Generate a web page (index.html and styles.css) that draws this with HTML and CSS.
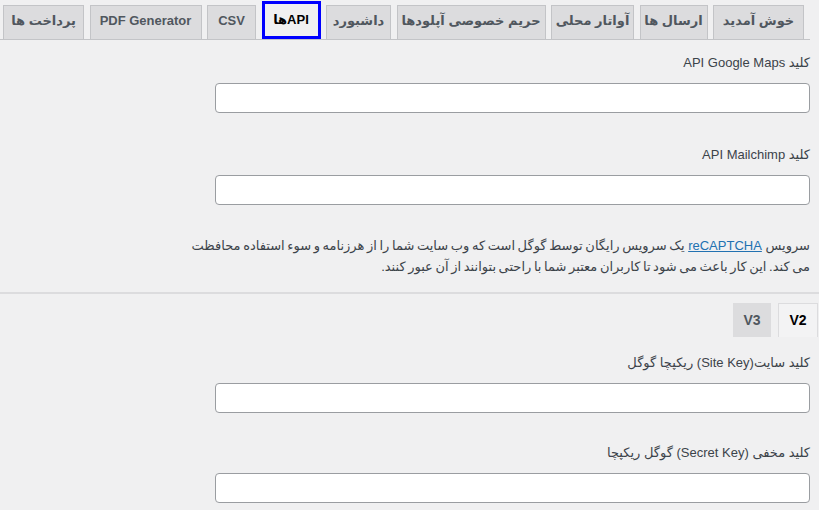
FILE: index.html
```html
<!DOCTYPE html>
<html lang="fa" dir="rtl">
<head>
<meta charset="utf-8">
<title>تنظیمات API</title>
<link rel="stylesheet" href="styles.css">
</head>
<body>
<nav class="tabs">
  <a class="tab tab-welcome">خوش آمدید</a>
  <a class="tab tab-send">ارسال ها</a>
  <a class="tab tab-avatar">آواتار محلی</a>
  <a class="tab tab-privacy">حریم خصوصی آپلودها</a>
  <a class="tab tab-dashboard">داشبورد</a>
  <a class="tab tab-api is-active">APIها</a>
  <a class="tab tab-csv">CSV</a>
  <a class="tab tab-pdf">PDF Generator</a>
  <a class="tab tab-pay">پرداخت ها</a>
</nav>

<section class="section section-api">
  <div class="field field-first">
    <label class="field-label">کلید API Google Maps</label>
    <input class="text-input" type="text">
  </div>
  <div class="field">
    <label class="field-label">کلید API Mailchimp</label>
    <input class="text-input" type="text">
  </div>
  <p class="note">سرویس <a class="note-link">reCAPTCHA</a> یک سرویس رایگان توسط گوگل است که وب سایت شما را از هرزنامه و سوء استفاده محافظت<br>می کند. این کار باعث می شود تا کاربران معتبر شما با راحتی بتوانند از آن عبور کنند.</p>
</section>

<hr class="divider">

<div class="subtabs">
  <a class="subtab is-active">V2</a>
  <a class="subtab">V3</a>
</div>

<section class="section section-recaptcha">
  <div class="field field-first">
    <label class="field-label">کلید سایت(Site Key) ریکپچا گوگل</label>
    <input class="text-input" type="text">
  </div>
  <div class="field">
    <label class="field-label">کلید مخفی (Secret Key) گوگل ریکپچا</label>
    <input class="text-input" type="text">
  </div>
</section>
</body>
</html>
```

FILE: styles.css
```css
html, body {
  margin: 0;
  padding: 0;
}

body {
  background: #f0f0f1;
  color: #3c434a;
  font-family: "Liberation Sans", "DejaVu Sans", sans-serif;
  font-size: 13px;
  width: 819px;
  height: 510px;
  overflow: hidden;
}

/* Top tabs */
.tabs {
  display: flex;
  align-items: flex-end;
  gap: 5.5px;
  padding: 1px 6px 0 0;
  margin-right: 9px;
  border-bottom: 1px solid #c3c4c7;
  white-space: nowrap;
}

.tab {
  box-sizing: border-box;
  height: 34px;
  padding-bottom: 2px;
  line-height: 30px;
  text-align: center;
  font-size: 13px;
  font-weight: 700;
  color: #50575e;
  background: #dcdcde;
  border: 1px solid #c3c4c7;
  border-bottom: none;
  flex: none;
}

.tab.is-active {
  height: 38px;
  padding: 0;
  line-height: 32px;
  color: #000;
  background: #f0f0f1;
  border: 3px solid #0000ff;
}

.tab-welcome { width: 91px; }
.tab-send { width: 68px; }
.tab-avatar { width: 83px; }
.tab-privacy { width: 149px; }
.tab-dashboard { width: 65px; }
.tab-api { width: 59px; }
.tab-csv { width: 49px; }
.tab-pdf { width: 112px; }
.tab-pay { width: 81px; }

/* Sections */
.section {
  padding-right: 9px;
}

.field {
  margin-top: 32px;
}

.section-api .field-first {
  margin-top: 13px;
}

.section-recaptcha .field-first {
  margin-top: 16px;
}

.section-recaptcha .field + .field {
  margin-top: 30px;
}

.field-label {
  display: block;
  line-height: 20px;
  color: #3c434a;
}

.text-input {
  display: block;
  box-sizing: border-box;
  width: 595px;
  height: 30px;
  margin: 10px 0 0 0;
  padding: 0 8px;
  background: #fff;
  border: 1px solid #9a9da1;
  border-radius: 4px;
  font: inherit;
}

.note {
  width: 640px;
  margin: 30px 0 0 0;
  line-height: 21px;
  word-spacing: -1px;
  color: #3c434a;
}

.note-link {
  margin: 0 1px;
  word-spacing: normal;
  color: #2271b1;
  text-decoration: underline;
}

.divider {
  height: 2px;
  margin: 15px 0 0 0;
  border: none;
  background: #dcdcde;
}

/* Sub tabs */
.subtabs {
  display: flex;
  gap: 7px;
  margin-top: 9px;
  padding-right: 1px;
}

.subtab {
  box-sizing: border-box;
  height: 34px;
  width: 38px;
  line-height: 32px;
  text-align: center;
  font-size: 14px;
  font-weight: 700;
  color: #50575e;
  background: #dcdcde;
  border: 1px solid #dcdcde;
  border-bottom: none;
}

.subtab.is-active {
  width: 40px;
  color: #000;
  background: #f3f3f4;
  border-color: #dcdcde;
}
```
